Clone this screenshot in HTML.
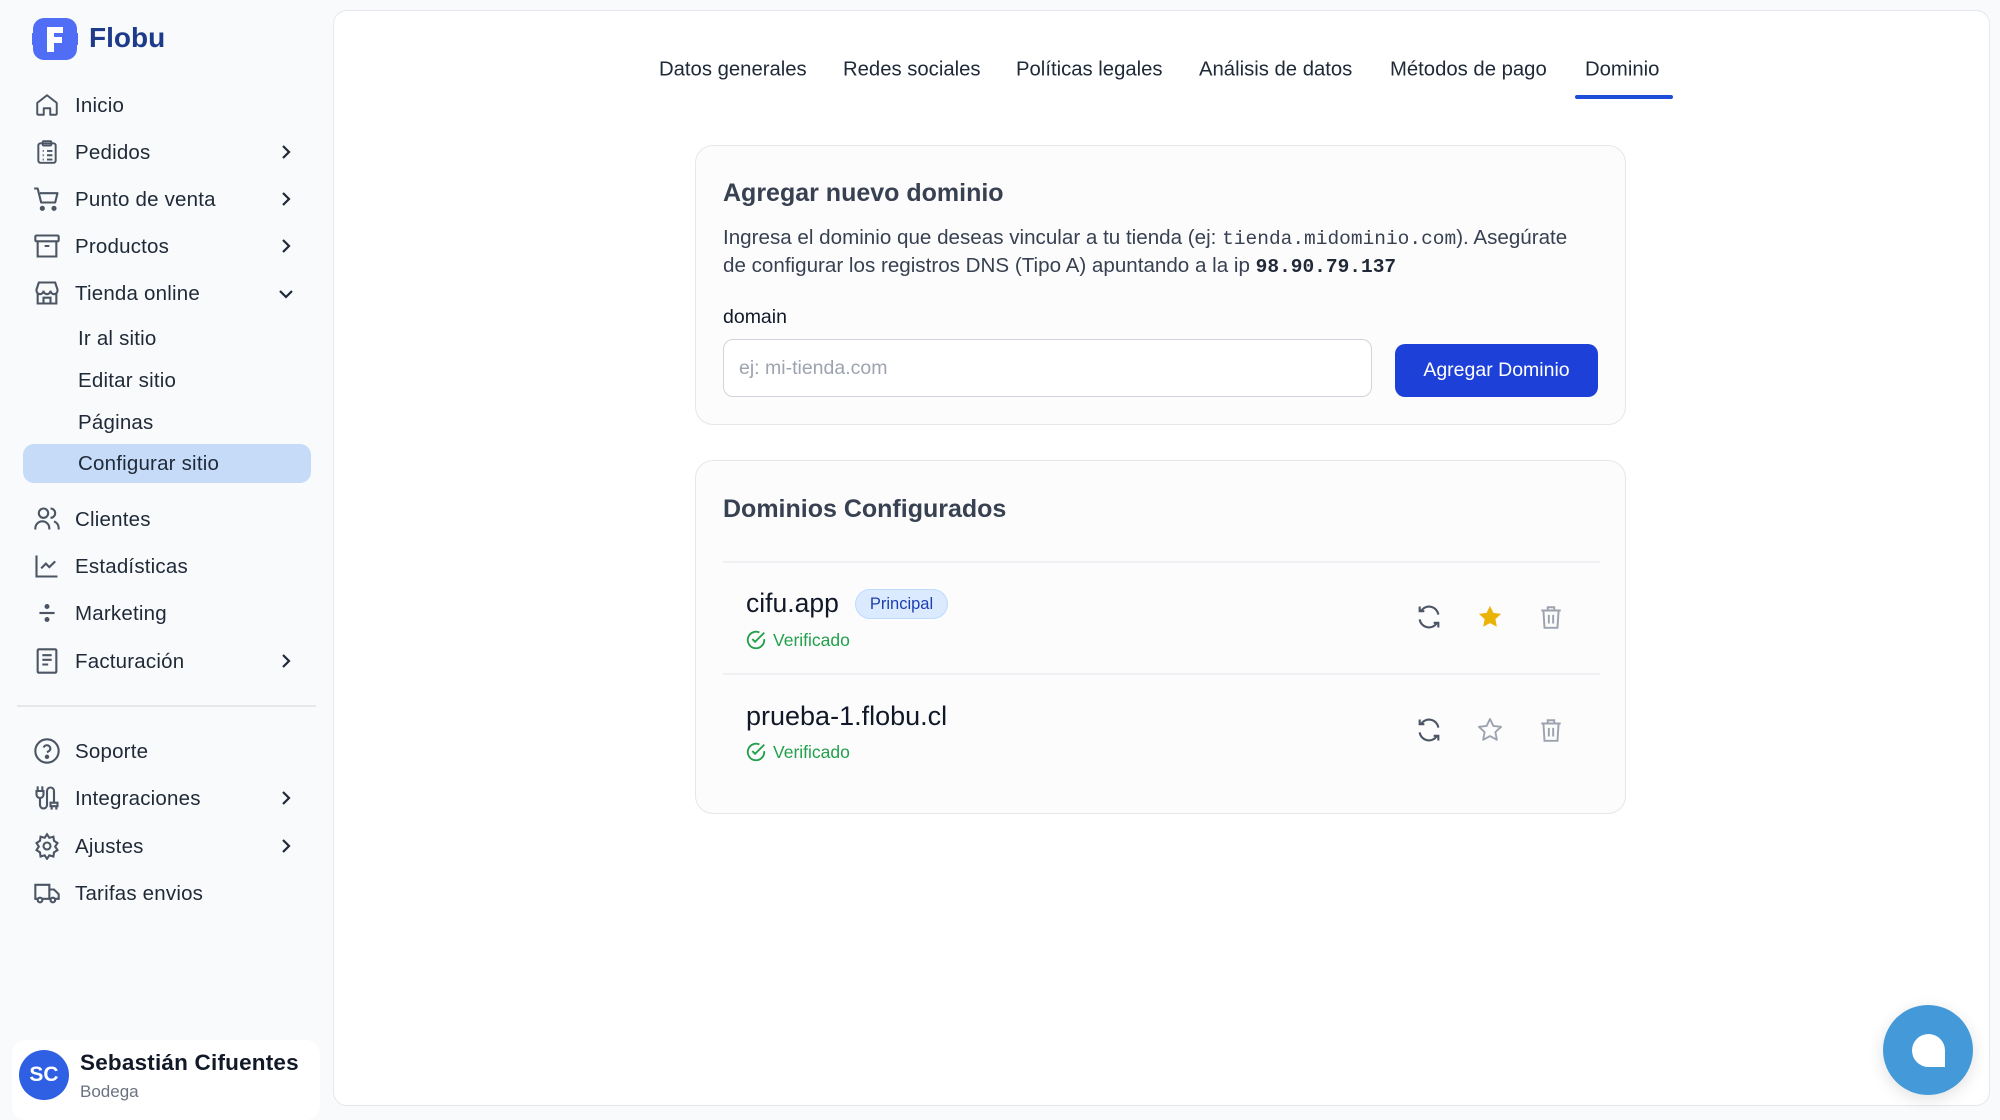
<!DOCTYPE html>
<html><head><meta charset="utf-8"><style>
*{box-sizing:border-box;margin:0;padding:0}
body{width:2000px;height:1111px;background:#f8fafc;font-family:"Liberation Sans",sans-serif;color:#1f2937;position:relative;overflow:hidden}
.a{position:absolute;white-space:nowrap}
.nav{font-size:20.5px;color:#1f2937;transform:translateY(-50%);letter-spacing:.2px}
.ic{position:absolute;transform:translate(-50%,-50%)}
.chev{position:absolute;transform:translate(-50%,-50%)}
svg{display:block}
.tab{font-size:20.3px;color:#1f2937;transform:translateY(-50%)}
.card{position:absolute;background:#fcfcfd;border:1.5px solid #e5e7eb;border-radius:18px}
.mono{font-family:"Liberation Mono",monospace}
</style></head><body>
<svg class="a" style="left:32px;top:17px" width="46" height="44" viewBox="0 0 46 44"><path d="M12 1h22a11 11 0 0 1 11 11v4a6 6 0 0 1 0 12v4a11 11 0 0 1-11 11H12A11 11 0 0 1 1 32v-4a6 6 0 0 1 0-12v-4A11 11 0 0 1 12 1z" fill="#4f6df5"/><path d="M15 10h16v6H22v4h8v6h-8v9h-7z" fill="#fff"/></svg>
<div class="a" style="left:89px;top:22px;font-size:28px;font-weight:bold;color:#1e3a8a">Flobu</div>

<div class="a" style="left:23px;top:444px;width:288px;height:39px;background:#c5dbf8;border-radius:11px"></div>

<div class="a nav" style="left:75px;top:106px">Inicio</div>
<div class="a nav" style="left:75px;top:153px">Pedidos</div>
<div class="a nav" style="left:75px;top:200px">Punto de venta</div>
<div class="a nav" style="left:75px;top:247px">Productos</div>
<div class="a nav" style="left:75px;top:294px">Tienda online</div>
<div class="a nav" style="left:78px;top:339px">Ir al sitio</div>
<div class="a nav" style="left:78px;top:381px">Editar sitio</div>
<div class="a nav" style="left:78px;top:423px">Páginas</div>
<div class="a nav" style="left:78px;top:464px">Configurar sitio</div>
<div class="a nav" style="left:75px;top:520px">Clientes</div>
<div class="a nav" style="left:75px;top:567px">Estadísticas</div>
<div class="a nav" style="left:75px;top:614px">Marketing</div>
<div class="a nav" style="left:75px;top:662px">Facturación</div>
<div class="a" style="left:17px;top:705px;width:299px;height:1.5px;background:#e5e7eb"></div>
<div class="a nav" style="left:75px;top:752px">Soporte</div>
<div class="a nav" style="left:75px;top:799px">Integraciones</div>
<div class="a nav" style="left:75px;top:847px">Ajustes</div>
<div class="a nav" style="left:75px;top:894px">Tarifas envios</div>

<svg class="ic" style="left:47px;top:105px" width="26" height="26" viewBox="0 0 24 24" fill="none" stroke="#4b5563" stroke-width="1.8" stroke-linejoin="round"><path d="M3 10l9-7 9 7v10a1 1 0 0 1-1 1h-5v-6h-6v6H4a1 1 0 0 1-1-1z"/></svg>
<svg class="ic" style="left:47px;top:152px" width="26" height="26" viewBox="0 0 24 24" fill="none" stroke="#4b5563" stroke-width="1.8"><rect x="4" y="4" width="16" height="18" rx="2"/><rect x="8" y="2" width="8" height="4" rx="1"/><path d="M8 11h1M8 15h1M8 19h1M12 11h5M12 15h5M12 19h5"/></svg>
<svg class="ic" style="left:47px;top:199px" width="28" height="28" viewBox="0 0 24 24" fill="none" stroke="#4b5563" stroke-width="1.8" stroke-linejoin="round"><path d="M1 3h3l3 12h12l2-8H6"/><circle cx="8" cy="20" r="1.3" fill="#4b5563"/><circle cx="18" cy="20" r="1.3" fill="#4b5563"/></svg>
<svg class="ic" style="left:47px;top:246px" width="28" height="28" viewBox="0 0 24 24" fill="none" stroke="#4b5563" stroke-width="1.8"><rect x="2" y="3" width="20" height="5" rx="1"/><path d="M4 8v13h16V8M10 12h4"/></svg>
<svg class="ic" style="left:47px;top:293px" width="28" height="28" viewBox="0 0 24 24" fill="none" stroke="#4b5563" stroke-width="1.8"><path d="M3 9l2-6h14l2 6v1a3 3 0 0 1-6 0 3 3 0 0 1-6 0 3 3 0 0 1-6 0zM4 12v9h16v-9M9 21v-5h6v5"/></svg>
<svg class="ic" style="left:47px;top:519px" width="28" height="28" viewBox="0 0 24 24" fill="none" stroke="#4b5563" stroke-width="1.8"><circle cx="9" cy="7" r="4"/><path d="M2 21v-1a6 6 0 0 1 12 0v1M15 3a4 4 0 0 1 0 8M18 14a6 6 0 0 1 4 6v1"/></svg>
<svg class="ic" style="left:47px;top:566px" width="28" height="28" viewBox="0 0 24 24" fill="none" stroke="#4b5563" stroke-width="1.8"><path d="M3 3v18h18M7 14l4-4 3 3 5-5"/></svg>
<svg class="ic" style="left:47px;top:613px" width="26" height="26" viewBox="0 0 24 24" fill="none" stroke="#4b5563" stroke-width="2"><path d="M5 12h14"/><circle cx="12" cy="6" r="1.3" fill="#4b5563"/><circle cx="12" cy="18" r="1.3" fill="#4b5563"/></svg>
<svg class="ic" style="left:47px;top:661px" width="28" height="28" viewBox="0 0 24 24" fill="none" stroke="#4b5563" stroke-width="1.8"><rect x="4" y="2" width="16" height="20" rx="1"/><path d="M8 7h8M8 11h8M8 15h5"/></svg>
<svg class="ic" style="left:47px;top:751px" width="28" height="28" viewBox="0 0 24 24" fill="none" stroke="#4b5563" stroke-width="1.8"><circle cx="12" cy="12" r="10"/><path d="M9.1 9a3 3 0 0 1 5.8 1c0 2-3 3-3 3"/><circle cx="12" cy="17" r="1" fill="#4b5563"/></svg>
<svg class="ic" style="left:47px;top:798px" width="28" height="28" viewBox="0 0 24 24" fill="none" stroke="#4b5563" stroke-width="1.8"><path d="M4 2v4M8 2v4M3 6h6v3a3 3 0 0 1-6 0zM6 12v6a3 3 0 0 0 6 0V6a3 3 0 0 1 6 0v10M15 16h6v3h-6zM16 19v3M20 19v3"/></svg>
<svg class="ic" style="left:47px;top:846px" width="28" height="28" viewBox="0 0 24 24" fill="none" stroke="#4b5563" stroke-width="1.8"><circle cx="12" cy="12" r="3"/><path d="M12 2l2 3 3.5-1 .5 3.5 3 2-2 3 2 3-3 2-.5 3.5-3.5-1-2 3-2-3-3.5 1L6 17.5l-3-2 2-3-2-3 3-2L6.5 4 10 5z"/></svg>
<svg class="ic" style="left:47px;top:893px" width="28" height="28" viewBox="0 0 24 24" fill="none" stroke="#4b5563" stroke-width="1.8"><path d="M2 5h12v12H2zM14 9h4l4 4v4h-8"/><circle cx="6" cy="18" r="2" fill="#f8fafc"/><circle cx="17" cy="18" r="2" fill="#f8fafc"/></svg>

<svg class="chev" style="left:286px;top:152px" width="14" height="16" viewBox="0 0 14 16"><path d="M4 2l6 6-6 6" fill="none" stroke="#1f2937" stroke-width="2.2"/></svg>
<svg class="chev" style="left:286px;top:199px" width="14" height="16" viewBox="0 0 14 16"><path d="M4 2l6 6-6 6" fill="none" stroke="#1f2937" stroke-width="2.2"/></svg>
<svg class="chev" style="left:286px;top:246px" width="14" height="16" viewBox="0 0 14 16"><path d="M4 2l6 6-6 6" fill="none" stroke="#1f2937" stroke-width="2.2"/></svg>
<svg class="chev" style="left:286px;top:294px" width="16" height="14" viewBox="0 0 16 14"><path d="M2 4l6 6 6-6" fill="none" stroke="#1f2937" stroke-width="2.2"/></svg>
<svg class="chev" style="left:286px;top:661px" width="14" height="16" viewBox="0 0 14 16"><path d="M4 2l6 6-6 6" fill="none" stroke="#1f2937" stroke-width="2.2"/></svg>
<svg class="chev" style="left:286px;top:798px" width="14" height="16" viewBox="0 0 14 16"><path d="M4 2l6 6-6 6" fill="none" stroke="#1f2937" stroke-width="2.2"/></svg>
<svg class="chev" style="left:286px;top:846px" width="14" height="16" viewBox="0 0 14 16"><path d="M4 2l6 6-6 6" fill="none" stroke="#1f2937" stroke-width="2.2"/></svg>

<div class="a" style="left:12px;top:1040px;width:308px;height:80px;background:#fff;border-radius:14px"></div>
<div class="a" style="left:19px;top:1050px;width:50px;height:50px;border-radius:50%;background:#2f5fe3;color:#fff;font-weight:bold;font-size:21px;line-height:50px;text-align:center">SC</div>
<div class="a" style="left:80px;top:1050px;font-size:22.5px;font-weight:bold;color:#111827;letter-spacing:.2px">Sebastián Cifuentes</div>
<div class="a" style="left:80px;top:1082px;font-size:17px;color:#6b7280">Bodega</div>

<div class="a" style="left:333px;top:10px;width:1657px;height:1096px;background:#fff;border:1.5px solid #e5e7eb;border-radius:14px"></div>

<div class="a tab" style="left:659px;top:70px">Datos generales</div>
<div class="a tab" style="left:843px;top:70px">Redes sociales</div>
<div class="a tab" style="left:1016px;top:70px">Políticas legales</div>
<div class="a tab" style="left:1199px;top:70px">Análisis de datos</div>
<div class="a tab" style="left:1390px;top:70px">Métodos de pago</div>
<div class="a tab" style="left:1585px;top:70px">Dominio</div>
<div class="a" style="left:1575px;top:95px;width:98px;height:4px;background:#1d4ed8;border-radius:2px"></div>

<div class="card" style="left:695px;top:145px;width:931px;height:280px"></div>
<div class="a" style="left:723px;top:179px;font-size:25px;font-weight:bold;color:#374151">Agregar nuevo dominio</div>
<div class="a" style="left:723px;top:226px;font-size:20.6px;color:#374151">Ingresa el dominio que deseas vincular a tu tienda (ej: <span class="mono" style="font-size:19.5px">tienda.midominio.com</span>). Asegúrate</div>
<div class="a" style="left:723px;top:254px;font-size:20.6px;color:#374151">de configurar los registros DNS (Tipo A) apuntando a la ip <span class="mono" style="font-weight:bold;font-size:19.5px;color:#1f2937">98.90.79.137</span></div>
<div class="a" style="left:723px;top:306px;font-size:19.5px;color:#111827">domain</div>
<div class="a" style="left:723px;top:339px;width:649px;height:58px;border:1.5px solid #d1d5db;border-radius:10px;background:#fff"></div>
<div class="a" style="left:739px;top:357px;font-size:19.5px;color:#9ca3af">ej: mi-tienda.com</div>
<div class="a" style="left:1395px;top:344px;width:203px;height:53px;background:#1d40d8;border-radius:10px;color:#fff;font-size:19.5px;line-height:53px;text-align:center">Agregar Dominio</div>

<div class="card" style="left:695px;top:460px;width:931px;height:354px"></div>
<div class="a" style="left:723px;top:495px;font-size:25px;font-weight:bold;color:#374151">Dominios Configurados</div>
<div class="a" style="left:723px;top:561px;width:877px;height:1.5px;background:#eef0f3"></div>
<div class="a" style="left:723px;top:673px;width:877px;height:1.5px;background:#eef0f3"></div>

<div class="a" style="left:746px;top:588px;font-size:26.5px;color:#111827">cifu.app</div>
<div class="a" style="left:855px;top:589px;width:93px;height:30px;border-radius:15px;background:#dbeafe;border:1px solid #bfdbfe;color:#1e40af;font-size:16.5px;line-height:28px;text-align:center">Principal</div>
<svg class="a" style="left:745px;top:629px" width="22" height="22" viewBox="0 0 24 24" fill="none" stroke="#22a04b" stroke-width="2"><path d="M21 11v1a9 9 0 1 1-5.3-8.2"/><path d="M8 11l3 3 10-10"/></svg>
<div class="a" style="left:773px;top:630px;font-size:17.5px;color:#22a04b">Verificado</div>

<div class="a" style="left:746px;top:701px;font-size:27px;color:#111827">prueba-1.flobu.cl</div>
<svg class="a" style="left:745px;top:741px" width="22" height="22" viewBox="0 0 24 24" fill="none" stroke="#22a04b" stroke-width="2"><path d="M21 11v1a9 9 0 1 1-5.3-8.2"/><path d="M8 11l3 3 10-10"/></svg>
<div class="a" style="left:773px;top:742px;font-size:17.5px;color:#22a04b">Verificado</div>

<svg class="ic" style="left:1429px;top:617px" width="28" height="28" viewBox="0 0 24 24" fill="none" stroke="#4b5563" stroke-width="1.8"><path d="M20 10a8 8 0 0 0-14.5-3.5M4 3v4h4M4 14a8 8 0 0 0 14.5 3.5M20 21v-4h-4"/></svg>
<svg class="ic" style="left:1490px;top:617px" width="28" height="28" viewBox="0 0 24 24"><path d="M12 2.5l2.9 6 6.6.8-4.9 4.5 1.3 6.6L12 17.2l-5.9 3.2 1.3-6.6L2.5 9.3l6.6-.8z" fill="#eab308"/></svg>
<svg class="ic" style="left:1551px;top:617px" width="26" height="28" viewBox="0 0 24 24" fill="none" stroke="#9ca3af" stroke-width="1.8"><path d="M3 6h18M9 6V3h6v3M5 6l1 16h12l1-16M10 10v8M14 10v8"/></svg>
<svg class="ic" style="left:1429px;top:730px" width="28" height="28" viewBox="0 0 24 24" fill="none" stroke="#4b5563" stroke-width="1.8"><path d="M20 10a8 8 0 0 0-14.5-3.5M4 3v4h4M4 14a8 8 0 0 0 14.5 3.5M20 21v-4h-4"/></svg>
<svg class="ic" style="left:1490px;top:730px" width="28" height="28" viewBox="0 0 24 24"><path d="M12 2.5l2.9 6 6.6.8-4.9 4.5 1.3 6.6L12 17.2l-5.9 3.2 1.3-6.6L2.5 9.3l6.6-.8z" fill="none" stroke="#9ca3af" stroke-width="1.6" stroke-linejoin="round"/></svg>
<svg class="ic" style="left:1551px;top:730px" width="26" height="28" viewBox="0 0 24 24" fill="none" stroke="#9ca3af" stroke-width="1.8"><path d="M3 6h18M9 6V3h6v3M5 6l1 16h12l1-16M10 10v8M14 10v8"/></svg>

<div class="a" style="left:1883px;top:1005px;width:90px;height:90px;border-radius:50%;background:#4499d9;box-shadow:0 4px 16px rgba(0,0,0,.12)"></div>
<div class="a" style="left:1912px;top:1034px;width:33px;height:33px;background:#fff;border-radius:17px 17px 0 17px"></div>
</body></html>
